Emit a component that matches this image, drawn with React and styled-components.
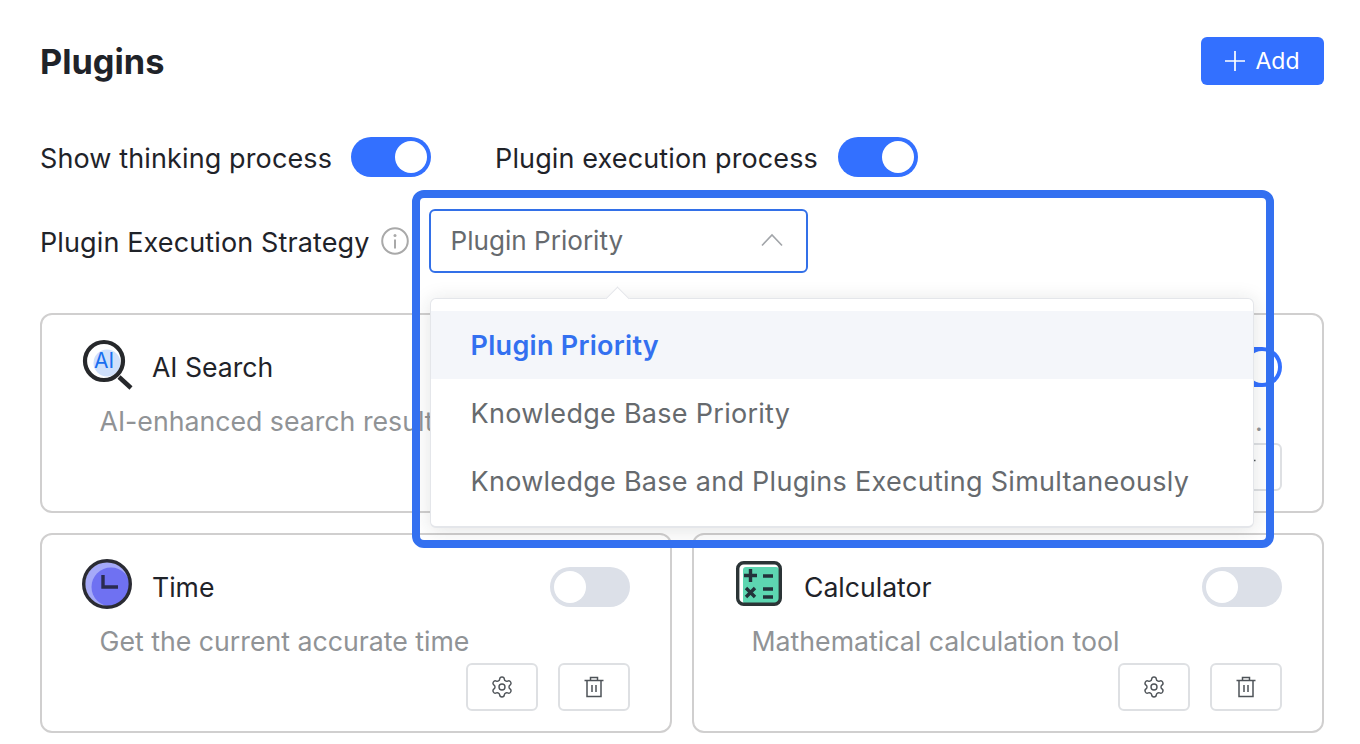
import React from "react";
import styled, { createGlobalStyle } from "styled-components";
import { Settings } from "lucide-react";

const Global = createGlobalStyle`
  html, body { margin: 0; padding: 0; background: #fff; }
  body { font-family: Inter, "Noto Sans", "Liberation Sans", sans-serif; overflow: hidden; }
`;

const Page = styled.div`
  position: relative;
  width: 1360px;
  height: 744px;
  box-sizing: border-box;
  padding: 37px 36px 0 40px;
  overflow: hidden;
`;
const Header = styled.div`
  display: flex;
  justify-content: space-between;
  align-items: center;
  height: 48px;
`;
const Title = styled.h1`
  margin: 0;
  padding-top: 2px;
  font-size: 34.3px;
  line-height: 48px;
  font-weight: 700;
  color: #1f2329;
`;
const AddButton = styled.button`
  display: flex;
  align-items: center;
  justify-content: center;
  gap: 10px;
  width: 123px;
  height: 48px;
  padding: 0;
  border: 0;
  border-radius: 6px;
  background: #3370ff;
  color: #fff;
  font: 400 23px Inter, sans-serif;
`;
const ToggleRow = styled.div`
  display: flex;
  align-items: center;
  margin-top: 52px;
  height: 40px;
`;
const Label = styled.span`
  margin-top: 4px;
  margin-right: ${(p) => p.$mr || 20}px;
  font-size: 27px;
  letter-spacing: 0.12px;
  line-height: 40px;
  color: #1f2329;
  white-space: nowrap;
`;
const Switch = styled.span`
  position: relative;
  display: block;
  flex: none;
  width: 80px;
  height: 40px;
  box-sizing: border-box;
  border-radius: 20px;
  background: ${(p) => (p.$on ? "#3370ff" : "#dce0e8")};
  margin-right: ${(p) => p.$mr || 0}px;
  &::after {
    content: "";
    position: absolute;
    top: 4px;
    left: ${(p) => (p.$on ? "44px" : "4px")};
    width: 32px;
    height: 32px;
    border-radius: 50%;
    background: #fff;
  }
`;
const StrategyRow = styled.div`
  display: flex;
  align-items: center;
  margin-top: 32px;
  height: 64px;
`;
const Info = styled.span`
  display: flex;
  margin: 0 20px 0 -9px;
`;
const SelectWrap = styled.div`
  position: relative;
  z-index: 3;
  width: 379px;
`;
const Select = styled.div`
  display: flex;
  align-items: center;
  justify-content: space-between;
  box-sizing: border-box;
  height: 64px;
  padding: 0 22px 2px 20px;
  border: 2px solid #3370e8;
  border-radius: 6px;
  background: #fff;
  font-size: 26.1px;
  color: #666a6e;
`;
const Menu = styled.div`
  position: absolute;
  left: 1px;
  top: 89px;
  width: 824px;
  height: 230px;
  box-sizing: border-box;
  padding: 12px 0;
  background: #fff;
  border: 1px solid #e4e6ea;
  border-bottom-width: 2px;
  border-radius: 6px;
  box-shadow: 0 2px 20px rgba(31, 35, 41, 0.13);
  &::before {
    content: "";
    position: absolute;
    top: -9px;
    left: 178px;
    width: 16px;
    height: 16px;
    background: #fff;
    border-left: 1px solid #e4e6ea;
    border-top: 1px solid #e4e6ea;
    transform: rotate(45deg);
  }
`;
const Option = styled.div`
  position: relative;
  height: 68px;
  line-height: 70px;
  padding-left: 40px;
  font-size: 27px;
  letter-spacing: 0.28px;
  white-space: nowrap;
  color: ${(p) => (p.$active ? "#3370f0" : "#666a6e")};
  font-weight: ${(p) => (p.$active ? 600 : 400)};
  background: ${(p) => (p.$active ? "#f4f6fa" : "transparent")};
`;
const Highlight = styled.div`
  position: absolute;
  left: 412px;
  top: 190px;
  width: 862px;
  height: 358px;
  box-sizing: border-box;
  border: 8px solid #3370f0;
  border-radius: 12px;
  z-index: 4;
  pointer-events: none;
`;
const Grid = styled.div`
  display: grid;
  grid-template-columns: 632px 632px;
  gap: 20px;
  margin-top: 40px;
`;
const Card = styled.div`
  box-sizing: border-box;
  height: 200px;
  padding: 20px 40px;
  border: 2px solid #d0cfcf;
  border-radius: 12px;
  background: #fff;
`;
const CardHead = styled.div`
  display: flex;
  align-items: center;
  height: 64px;
`;
const CardTitle = styled.span`
  flex: 1;
  margin-left: 14px;
  font-size: 26.6px;
  color: #1f2329;
`;
const Desc = styled.div`
  margin: 2px 0 0 17.5px;
  font-size: 26.7px;
  line-height: 40px;
  color: #909396;
  white-space: nowrap;
`;
const Actions = styled.div`
  display: flex;
  justify-content: flex-end;
  gap: 20px;
  margin-top: 2px;
`;
const IconButton = styled.button`
  display: flex;
  align-items: center;
  justify-content: center;
  width: 72px;
  height: 48px;
  padding: 0;
  border: 2px solid #dee0e3;
  border-radius: 6px;
  background: #fff;
`;
const IconSlot = styled.span`
  display: flex;
  flex: none;
  align-self: flex-start;
  width: 56px;
  height: 56px;
  margin-top: 2px;
`;

const Trash = () => (
  <svg width="24" height="24" viewBox="0 0 24 24" fill="none" stroke="#4e5358" strokeWidth="1.5">
    <path d="M2.5 5.5h19M8.5 5.5V2.5h7v3M5 5.5V21.5h14V5.5M10 10v7M14 10v7" />
  </svg>
);
const Plus = () => (
  <svg width="20" height="20" viewBox="0 0 20 20" stroke="#fff" strokeWidth="1.7" fill="none">
    <path d="M10 0v20M0 10h20" />
  </svg>
);
const InfoIcon = () => (
  <svg width="28" height="28" viewBox="0 0 28 28" fill="none">
    <circle cx="14" cy="14" r="12.8" stroke="#a9a9a9" strokeWidth="2" />
    <circle cx="14" cy="8.6" r="1.5" fill="#a9a9a9" />
    <path d="M14 12.5v9" stroke="#a9a9a9" strokeWidth="2" />
  </svg>
);
const Chevron = () => (
  <svg width="24" height="14" viewBox="0 0 24 14" fill="none" stroke="#a2a5a9" strokeWidth="1.6">
    <path d="M2 12.5L12 2l10 10.5" />
  </svg>
);
const SearchIcon = () => (
  <svg width="56" height="56" viewBox="0 0 56 56" fill="none">
    <circle cx="25" cy="26" r="13.5" fill="#cfe0fb" />
    <circle cx="22" cy="24" r="19" stroke="#26282b" strokeWidth="4.2" fill="none" />
    <path d="M37 40l12 11" stroke="#26282b" strokeWidth="4.5" />
    <text x="22" y="31" textAnchor="middle" fontFamily="Inter, sans-serif" fontSize="21" fill="#1a6ff0">AI</text>
  </svg>
);
const ClockIcon = () => (
  <svg width="56" height="56" viewBox="0 0 56 56" fill="none">
    <circle cx="25" cy="27" r="22" fill="#a5a9f8" />
    <circle cx="29" cy="30" r="19.5" fill="#6f71f2" />
    <circle cx="25" cy="27" r="23.3" stroke="#2a2b33" strokeWidth="3.4" fill="none" />
    <path d="M21 18v12h15" stroke="#2a2b50" strokeWidth="3.4" />
  </svg>
);
const CalcIcon = () => (
  <svg width="56" height="56" viewBox="0 0 56 56" fill="none">
    <rect x="9" y="10" width="36" height="37" rx="3" fill="#5dd6b1" />
    <rect x="3.7" y="5.7" width="42.6" height="41.6" rx="6" stroke="#2b3436" strokeWidth="3.4" fill="none" />
    <path d="M16.5 12v13M10 18.5h13M29 19h10M12 31l9 9M21 31l-9 9M29 32h10M29 40h10" stroke="#23323a" strokeWidth="3.4" />
  </svg>
);

const Item = ({ icon, title, desc, on }) => (
  <Card>
    <CardHead>
      <IconSlot>{icon}</IconSlot>
      <CardTitle>{title}</CardTitle>
      <Switch $on={on} />
    </CardHead>
    <Desc>{desc}</Desc>
    <Actions>
      <IconButton><Settings size={24} color="#4e5358" strokeWidth={1.4} /></IconButton>
      <IconButton><Trash /></IconButton>
    </Actions>
  </Card>
);

export default function App() {
  return (
    <Page>
      <Global />
      <Header>
        <Title>Plugins</Title>
        <AddButton><Plus />Add</AddButton>
      </Header>
      <ToggleRow>
        <Label $mr={19}>Show thinking process</Label>
        <Switch $on $mr={64} />
        <Label>Plugin execution process</Label>
        <Switch $on />
      </ToggleRow>
      <StrategyRow>
        <Label>Plugin Execution Strategy</Label>
        <Info><InfoIcon /></Info>
        <SelectWrap>
          <Select>
            Plugin Priority
            <Chevron />
          </Select>
          <Menu>
            <Option $active>Plugin Priority</Option>
            <Option>Knowledge Base Priority</Option>
            <Option>Knowledge Base and Plugins Executing Simultaneously</Option>
          </Menu>
        </SelectWrap>
      </StrategyRow>
      <Highlight />
      <Grid>
        <Item icon={<SearchIcon />} title="AI Search" desc="AI-enhanced search results." />
        <Item icon={<SearchIcon />} title="Web Search" desc="Search the web to get latest information." on />
        <Item icon={<ClockIcon />} title="Time" desc="Get the current accurate time" />
        <Item icon={<CalcIcon />} title="Calculator" desc="Mathematical calculation tool" />
      </Grid>
    </Page>
  );
}
